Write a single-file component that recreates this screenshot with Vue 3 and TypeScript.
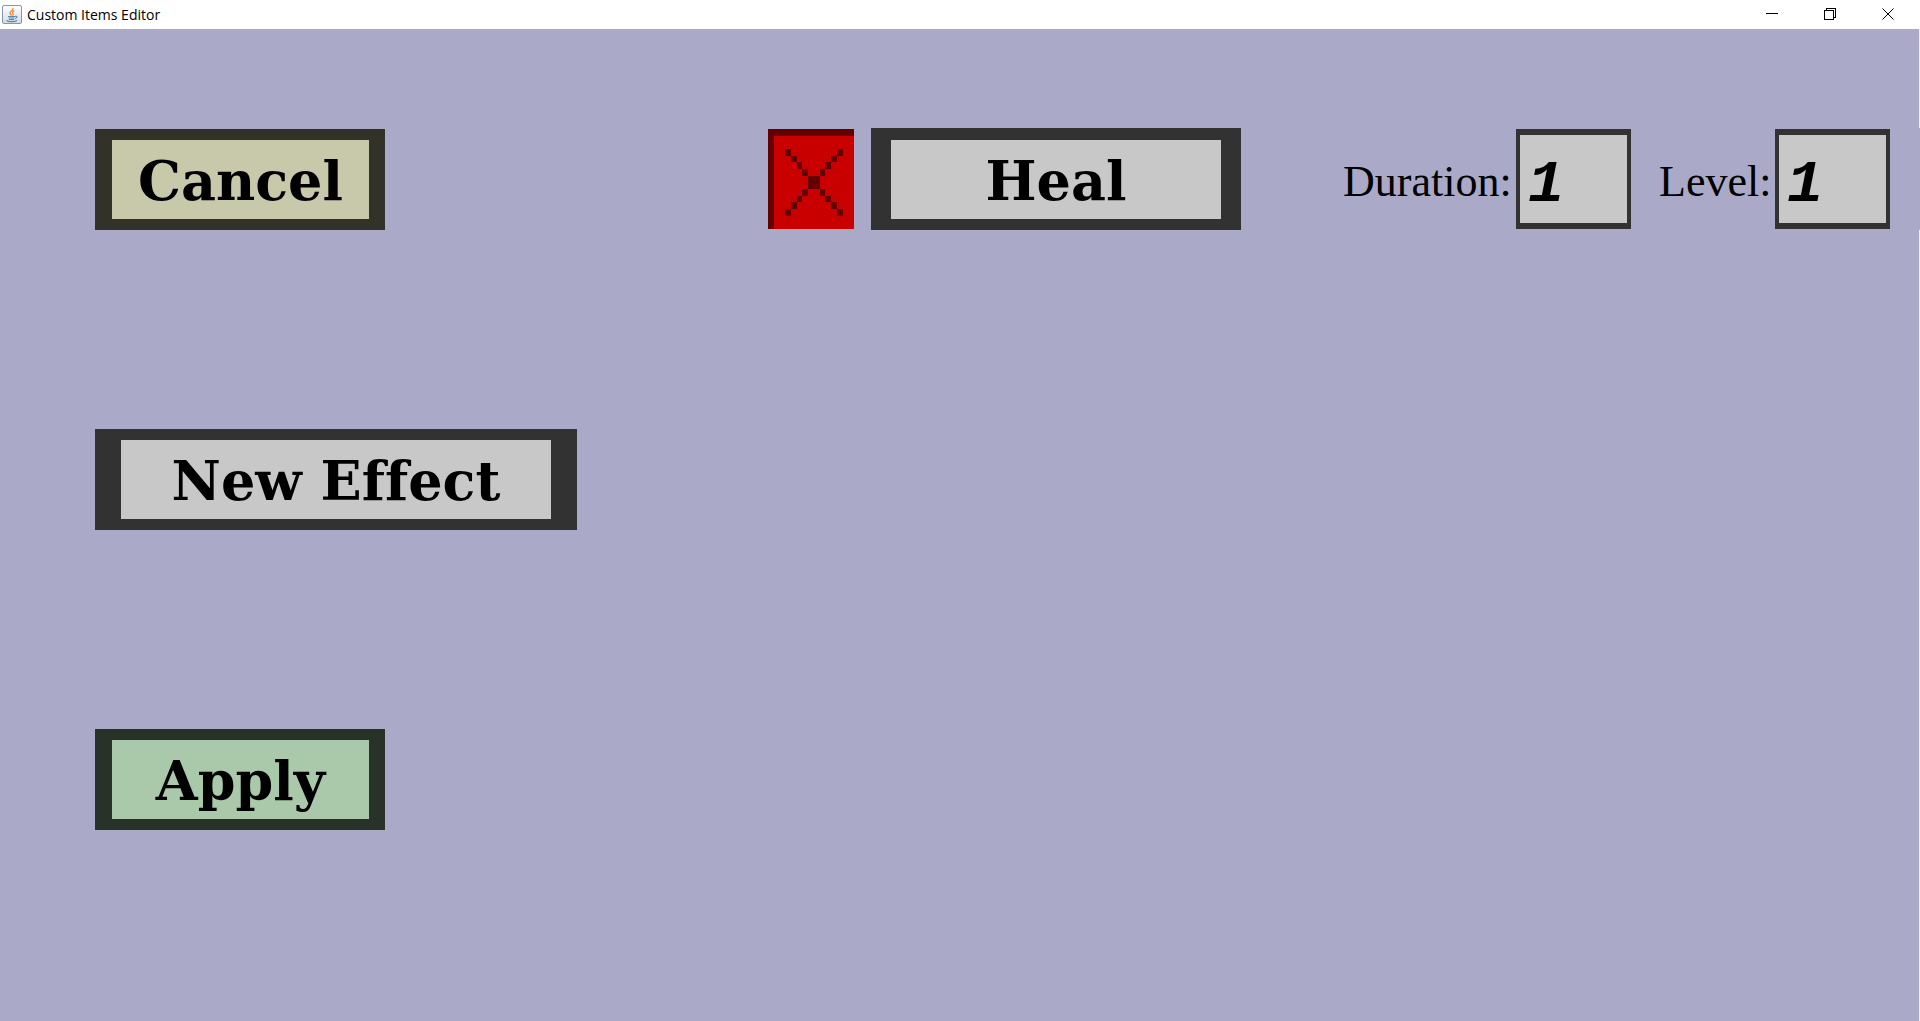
<script setup lang="ts">
import { ref } from 'vue'

interface Effect {
  id: number
  name: string
  duration: string
  level: string
}

const effects = ref<Effect[]>([{ id: 1, name: 'Heal', duration: '1', level: '1' }])

function addEffect(): void {
  const id = Math.max(0, ...effects.value.map((e) => e.id)) + 1
  effects.value.push({ id, name: 'Heal', duration: '1', level: '1' })
}

function removeEffect(id: number): void {
  effects.value = effects.value.filter((e) => e.id !== id)
}

// Squares of the pixel-art cross, on a 15 x 15 grid
const crossCells: number[][] = [
  [3, 3], [4, 4], [5, 5], [6, 6],
  [12, 3], [11, 4], [10, 5], [9, 6],
  [6, 9], [5, 10], [4, 11], [3, 12],
  [9, 9], [10, 10], [11, 11], [12, 12],
]
</script>

<template>
  <div class="window">
    <header class="titlebar">
      <svg class="app-icon" viewBox="0 0 20 20" aria-hidden="true">
        <defs>
          <linearGradient id="tile" x1="0" y1="0" x2="0" y2="1">
            <stop offset="0" stop-color="#ffffff" />
            <stop offset="1" stop-color="#d3dbe4" />
          </linearGradient>
        </defs>
        <rect x="0.5" y="0.5" width="19" height="18" rx="1.5" fill="url(#tile)" stroke="#8297ab" />
        <path d="M11 3c1 2-3 3-3 5 0 1 1 1.500 1.500 2.500M12.500 5.500c-2 1-2.500 2-1.500 3 .5.7 0 1.300-.5 2" fill="none" stroke="#e98a3c" stroke-width="1.300" />
        <path d="M6 11.500h7.500M6.500 13h6M7 14.500h5M13.500 11c2.500 0 1.500 2-.5 2.500M4.500 15.500c2 1.500 8 1.500 10.500 0" fill="none" stroke="#5d86ab" stroke-width="1.100" />
      </svg>
      <span class="title">Custom Items Editor</span>
      <div class="window-buttons">
        <button type="button" aria-label="Minimize">
          <svg viewBox="0 0 12 12" shape-rendering="crispEdges"><path d="M0 5.500h12" /></svg>
        </button>
        <button type="button" aria-label="Restore">
          <svg viewBox="0 0 12 12" shape-rendering="crispEdges"><path d="M.5 2.500h9v9h-9zM2.500 2.500v-2h9v9h-2" /></svg>
        </button>
        <button type="button" aria-label="Close">
          <svg viewBox="0 0 12 12"><path d="M.5.5l11 11M11.500.5l-11 11" /></svg>
        </button>
      </div>
    </header>

    <main class="editor">
      <nav class="actions">
        <button type="button" class="action cancel">Cancel</button>
        <button type="button" class="action wide" @click="addEffect">New Effect</button>
        <button type="button" class="action apply">Apply</button>
      </nav>

      <section class="effects">
        <div v-for="effect in effects" :key="effect.id" class="effect">
          <button type="button" class="remove" aria-label="Remove effect" @click="removeEffect(effect.id)">
            <svg viewBox="0 0 15 15" preserveAspectRatio="none" shape-rendering="crispEdges">
              <rect width="15" height="15" fill="#c80000" />
              <path d="M0 0h15v1H1v14H0z" fill="#640000" />
              <rect x="7" y="7" width="2" height="2" fill="#640000" />
              <rect v-for="([x, y], i) in crossCells" :key="i" :x="x" :y="y" width="1" height="1" fill="#640000" />
            </svg>
          </button>
          <button type="button" class="action name">{{ effect.name }}</button>
          <label class="caption duration" :for="`duration-${effect.id}`">Duration:</label>
          <input :id="`duration-${effect.id}`" v-model="effect.duration" type="text" class="value" />
          <label class="caption level" :for="`level-${effect.id}`">Level:</label>
          <input :id="`level-${effect.id}`" v-model="effect.level" type="text" class="value" />
        </div>
      </section>
    </main>
  </div>
</template>

<style>
body {
  margin: 0;
}
</style>

<style scoped>
.window {
  display: flex;
  flex-direction: column;
  min-height: 100vh;
  background: #aaaac8;
  color: #000;
}

.titlebar {
  display: flex;
  align-items: center;
  height: 29px;
  padding-left: 2px;
  background: #fff;
  font: 14px/20px 'Open Sans', 'Noto Sans', sans-serif;
}

.app-icon {
  width: 20px;
  height: 20px;
  margin-right: 5px;
}

.window-buttons {
  display: flex;
  align-self: flex-start;
  height: 28px;
  margin-left: auto;
  padding-right: 3px;
}

.window-buttons button {
  display: flex;
  align-items: center;
  justify-content: center;
  width: 58px;
  padding: 0;
  border: 0;
  background: none;
}

.window-buttons svg {
  width: 12px;
  height: 12px;
  fill: none;
  stroke: #000;
}

.editor {
  display: flex;
  flex: 1;
  align-items: flex-start;
  padding: 99px 0 0 95px;
  border-right: 1px solid #f0f0f0;
}

.actions {
  display: flex;
  flex-direction: column;
  align-items: flex-start;
  gap: 199px;
  padding-top: 1px;
}

.action {
  box-sizing: border-box;
  width: 290px;
  height: 101px;
  padding: 3px 0 0;
  border: solid #323232;
  border-width: 11px 16px 11px 17px;
  background: #c8c8c8;
  color: #000;
  font: bold 54px/72px 'DejaVu Serif', 'Times New Roman', serif;
  font-variant-ligatures: none;
  white-space: nowrap;
}

.cancel {
  border-color: #323228;
  background: #c8c8aa;
}

.apply {
  border-color: #283228;
  background: #aac8aa;
}

.wide {
  width: 482px;
  border-width: 11px 26px;
}

.effects {
  display: flex;
  flex: 1;
  flex-direction: column;
  gap: 20px;
  margin-right: -1px;
}

.effect {
  display: flex;
  align-items: center;
  justify-content: flex-end;
  padding-right: 30px;
  background: #aaaac8;
}

.remove {
  width: 86px;
  height: 100px;
  margin-right: 17px;
  padding: 0;
  border: 0;
  background: none;
}

.remove svg {
  display: block;
  width: 100%;
  height: 100%;
}

.name {
  width: 370px;
  height: 102px;
  border-width: 12px 20px 11px;
}

.caption {
  padding-top: 6px;
  font: 44px/56px 'Liberation Serif', 'Times New Roman', serif;
  white-space: nowrap;
}

.duration {
  width: 173px;
  margin-left: 102px;
}

.level {
  width: 116px;
  margin-left: 28px;
}

.value {
  box-sizing: border-box;
  width: 115px;
  height: 100px;
  padding: 12px 6px 0 8px;
  border: solid #323232;
  border-width: 6px 4px;
  border-radius: 0;
  background: #c8c8c8;
  color: #000;
  font: italic bold 60px/72px 'Liberation Mono', 'Courier New', monospace;
}
</style>
